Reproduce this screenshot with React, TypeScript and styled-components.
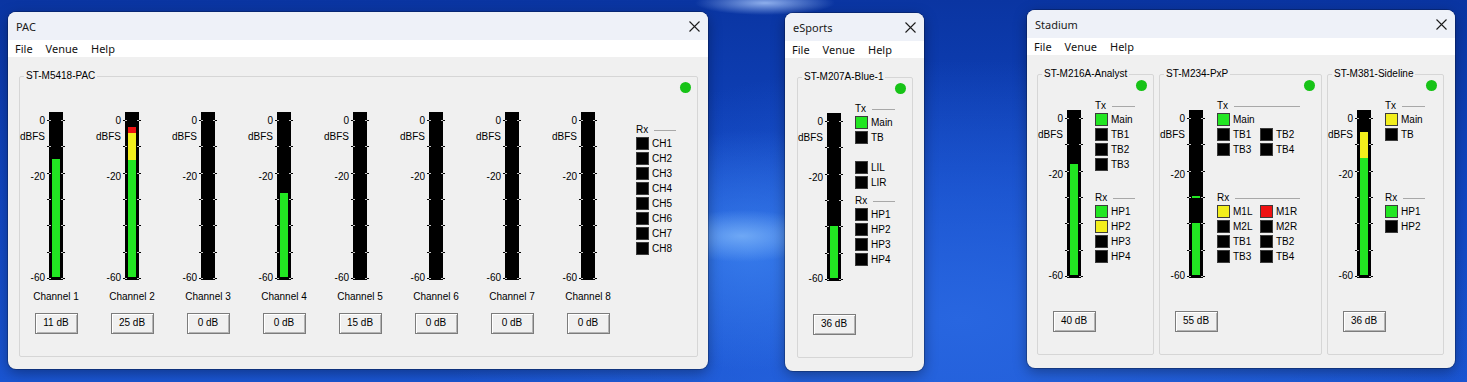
import React from 'react';
import styled, { createGlobalStyle } from 'styled-components';

const GlobalStyle = createGlobalStyle`
	html, body {
		margin: 0;
		padding: 0;
	}

	body {
		width: 1467px;
		height: 382px;
		overflow: hidden;
		font-family: "Liberation Sans", Arial, sans-serif;
	}
`;

const GREEN = '#22e622';
const YELLOW = '#f2ee1c';
const RED = '#ee1111';

const Desktop = styled.div`
	position: relative;
	width: 1467px;
	height: 382px;
	overflow: hidden;
	background:
		radial-gradient(ellipse 80px 26px at 742px 236px, rgba(130, 185, 250, 0.75), rgba(130, 185, 250, 0)),
		radial-gradient(ellipse 160px 120px at 750px 250px, rgba(60, 130, 240, 0.8), rgba(60, 130, 240, 0)),
		radial-gradient(ellipse 70px 12px at 765px 3px, rgba(175, 205, 255, 0.8), rgba(175, 205, 255, 0)),
		radial-gradient(ellipse 520px 260px at 960px 320px, #2866e0, rgba(40, 102, 224, 0)),
		linear-gradient(180deg, #0a35a2 0%, #1146c2 50%, #1a55d2 100%);
`;

/* windows sit on the desktop at their own place, like real desktop windows */
const Window = styled.div<{ $x: number; $y: number; $w: number; $h: number }>`
	position: absolute;
	left: ${(p) => p.$x}px;
	top: ${(p) => p.$y}px;
	width: ${(p) => p.$w}px;
	height: ${(p) => p.$h}px;
	display: flex;
	flex-direction: column;
	background-color: #f0f0f0;
	border-radius: 8px;
	overflow: hidden;
	box-shadow: 0 0 0 1px rgba(0, 0, 0, 0.22), 0 4px 14px rgba(0, 0, 0, 0.35);
`;

const TitleBar = styled.div`
	height: 28px;
	flex: none;
	display: flex;
	align-items: center;
	justify-content: space-between;
	padding: 0 8px 0 8px;
	background-color: #eef1f8;
	font-family: "Noto Sans", "Open Sans", sans-serif;
	font-size: 11px;
	color: #1a1a1a;
`;

const CloseButton = styled.span`
	display: flex;
	width: 11px;
	height: 11px;
`;

const MenuBar = styled.div`
	height: 17px;
	flex: none;
	display: flex;
	align-items: center;
	gap: 13px;
	padding-left: 7px;
	background-color: #ffffff;
	font-family: "Noto Sans", "Open Sans", sans-serif;
	font-size: 11px;
	color: #111;
`;

const Client = styled.div<{ $pad: string; $gap?: number }>`
	flex: 1;
	display: flex;
	gap: ${(p) => p.$gap || 0}px;
	padding: ${(p) => p.$pad};
	min-height: 0;
`;

const GroupBox = styled.fieldset<{ $w?: number }>`
	margin: 0;
	padding: 0 6px 0 0;
	min-width: 0;
	border: 1px solid #d6d6d6;
	border-radius: 2px;
	${(p) => (p.$w ? `width: ${p.$w}px; flex: none;` : 'flex: 1;')}
	box-sizing: border-box;
	font-size: 10px;
	color: #000;
`;

const Legend = styled.legend`
	margin-left: 4px;
	padding: 0 2px;
	line-height: 12px;
	font-size: 10px;
`;

const LedRow = styled.div`
	display: flex;
	justify-content: flex-end;
	height: 11px;
`;

const Led = styled.span`
	width: 11px;
	height: 11px;
	border-radius: 50%;
	background-color: #17c317;
`;

const Body = styled.div`
	display: flex;
	align-items: flex-start;
`;

const Strips = styled.div`
	display: flex;
	gap: 33px;
`;

const Strip = styled.div`
	display: flex;
	align-items: flex-start;
	gap: 4px;
	margin-top: 19px;
`;

const Scale = styled.div`
	width: 25px;
	height: 168px;
	display: flex;
	flex-direction: column;
	align-items: flex-end;
	font-size: 10px;
	line-height: 11px;
`;

const ScaleLabel = styled.span<{ $mt: number }>`
	margin-top: ${(p) => p.$mt}px;
`;

const BarColumn = styled.div`
	width: 14px;
	display: flex;
	flex-direction: column;
	align-items: center;
`;

const BarSvg = styled.svg`
	display: block;
	margin: 0 -2px;
	flex: none;
`;

const ChannelLabel = styled.span`
	margin-top: 11px;
	line-height: 12px;
	white-space: nowrap;
	font-size: 10px;
`;

const DbBox = styled.div<{ $mt: number }>`
	margin-top: ${(p) => p.$mt}px;
	flex: none;
	width: 43px;
	height: 21px;
	box-sizing: border-box;
	border: 1px solid #7c7c7c;
	box-shadow: inset 1px 1px 0 #ffffff, inset -1px -1px 0 #b4b4b4;
	background-color: #f0f0f0;
	text-align: center;
	font-size: 10px;
	line-height: 17px;
	white-space: nowrap;
`;

const Panel = styled.div<{ $ml: number; $mt: number }>`
	display: flex;
	flex-direction: column;
	margin-left: ${(p) => p.$ml}px;
	margin-top: ${(p) => p.$mt}px;
`;

const IndicatorGroup = styled.div<{ $cols: number; $minH?: number }>`
	display: flex;
	flex-direction: column;
	width: ${(p) => p.$cols * 43}px;
	min-height: ${(p) => p.$minH || 0}px;
`;

const GroupHeader = styled.div`
	display: flex;
	align-items: center;
	height: 13px;
	line-height: 13px;
	font-size: 10px;

	&::after {
		content: '';
		flex: 1;
		height: 1px;
		margin: 1px 3px 0 6px;
		background-color: #a8a8a8;
	}
`;

const IndicatorGrid = styled.div<{ $cols: number }>`
	display: grid;
	grid-template-columns: repeat(${(p) => p.$cols}, 43px);
	grid-auto-rows: 15px;
`;

const Indicator = styled.div`
	display: flex;
	align-items: center;
	gap: 3px;
	font-size: 10px;
	white-space: nowrap;
`;

const Square = styled.span<{ $color: string }>`
	width: 13px;
	height: 13px;
	box-sizing: border-box;
	border: 1px solid #3c3c3c;
	background-color: ${(p) => p.$color};
	flex: none;
`;

type Seg = { top: number; bottom: number; color: string };

interface MeterProps {
	segs: Seg[];
	peak?: number;
	label?: string;
	db: string;
}

const TICKS = [0, 1, 2, 3, 4, 5, 6].map((i) => Math.round(8 + (i * 158) / 6));

const Meter = ({ segs, peak, label, db }: MeterProps) => (
	<Strip>
		<Scale>
			<ScaleLabel $mt={3}>0</ScaleLabel>
			<ScaleLabel $mt={5}>dBFS</ScaleLabel>
			<ScaleLabel $mt={29}>-20</ScaleLabel>
			<ScaleLabel $mt={90}>-60</ScaleLabel>
		</Scale>
		<BarColumn>
			<BarSvg width={18} height={168} viewBox="0 0 18 168">
				<rect x={2} y={0} width={14} height={168} fill="#000" />
				{segs.map((s) => (
					<rect key={s.top} x={5} y={s.top} width={8} height={s.bottom - s.top} fill={s.color} />
				))}
				{peak !== undefined && <rect x={5} y={peak} width={8} height={2} fill={GREEN} />}
				{TICKS.map((y) => (
					<g key={y}>
						<line x1={0} x2={2} y1={y + 0.5} y2={y + 0.5} stroke="#000" />
						<line x1={2} x2={4} y1={y + 0.5} y2={y + 0.5} stroke="#c8c8c8" />
						<line x1={14} x2={16} y1={y + 0.5} y2={y + 0.5} stroke="#c8c8c8" />
						<line x1={16} x2={18} y1={y + 0.5} y2={y + 0.5} stroke="#000" />
					</g>
				))}
			</BarSvg>
			{label && <ChannelLabel>{label}</ChannelLabel>}
			<DbBox $mt={label ? 10 : 33}>{db}</DbBox>
		</BarColumn>
	</Strip>
);

type Item = { name: string; color?: string } | null;

const IndicatorList = ({ title, items, cols = 1, minH }: { title: string; items: Item[]; cols?: number; minH?: number }) => (
	<IndicatorGroup $cols={cols} $minH={minH}>
		<GroupHeader>{title}</GroupHeader>
		<IndicatorGrid $cols={cols}>
			{items.map((it, i) =>
				it ? (
					<Indicator key={i}>
						<Square $color={it.color || '#000'} />
						{it.name}
					</Indicator>
				) : (
					<span key={i} />
				)
			)}
		</IndicatorGrid>
	</IndicatorGroup>
);

const CloseIcon = () => (
	<CloseButton>
		<svg width={11} height={11} viewBox="0 0 11 11">
			<path d="M0.5 0.5 L10.5 10.5 M10.5 0.5 L0.5 10.5" stroke="#1c1c1c" strokeWidth={1.1} fill="none" />
		</svg>
	</CloseButton>
);

const WindowChrome = ({ title }: { title: string }) => (
	<>
		<TitleBar>
			<span>{title}</span>
			<CloseIcon />
		</TitleBar>
		<MenuBar>
			<span>File</span>
			<span>Venue</span>
			<span>Help</span>
		</MenuBar>
	</>
);

const g = (top: number): Seg[] => [{ top, bottom: 165, color: GREEN }];

const pacChannels: { segs: Seg[]; db: string }[] = [
	{ segs: g(47), db: '11 dB' },
	{
		segs: [
			{ top: 15, bottom: 21, color: RED },
			{ top: 21, bottom: 48, color: YELLOW },
			{ top: 48, bottom: 165, color: GREEN },
		],
		db: '25 dB',
	},
	{ segs: [], db: '0 dB' },
	{ segs: g(81), db: '0 dB' },
	{ segs: [], db: '15 dB' },
	{ segs: [], db: '0 dB' },
	{ segs: [], db: '0 dB' },
	{ segs: [], db: '0 dB' },
];

const App = () => (
	<Desktop>
		<GlobalStyle />

		<Window $x={8} $y={12} $w={700} $h={357}>
			<WindowChrome title="PAC" />
			<Client $pad="13px 10px 12px 11px">
				<GroupBox>
					<Legend>ST-M5418-PAC</Legend>
					<LedRow>
						<Led />
					</LedRow>
					<Body>
						<Strips>
							{pacChannels.map((c, i) => (
								<Meter key={i} segs={c.segs} label={`Channel ${i + 1}`} db={c.db} />
							))}
						</Strips>
						<Panel $ml={41} $mt={30}>
							<IndicatorList
								title="Rx"
								items={['CH1', 'CH2', 'CH3', 'CH4', 'CH5', 'CH6', 'CH7', 'CH8'].map((name) => ({ name }))}
							/>
						</Panel>
					</Body>
				</GroupBox>
			</Client>
		</Window>

		<Window $x={785} $y={13} $w={139} $h={358}>
			<WindowChrome title="eSports" />
			<Client $pad="13px 11px 13px 12px">
				<GroupBox>
					<Legend>ST-M207A-Blue-1</Legend>
					<LedRow>
						<Led />
					</LedRow>
					<Body>
						<Meter segs={g(113)} db="36 dB" />
						<Panel $ml={14} $mt={8}>
							<IndicatorList
								title="Tx"
								minH={92}
								items={[{ name: 'Main', color: GREEN }, { name: 'TB' }, null, { name: 'LIL' }, { name: 'LIR' }]}
							/>
							<IndicatorList title="Rx" items={[{ name: 'HP1' }, { name: 'HP2' }, { name: 'HP3' }, { name: 'HP4' }]} />
						</Panel>
					</Body>
				</GroupBox>
			</Client>
		</Window>

		<Window $x={1027} $y={10} $w={428} $h={358}>
			<WindowChrome title="Stadium" />
			<Client $pad="13px 11px 13px 10px" $gap={5}>
				<GroupBox $w={117}>
					<Legend>ST-M216A-Analyst</Legend>
					<LedRow>
						<Led />
					</LedRow>
					<Body>
						<Meter segs={g(54)} db="40 dB" />
						<Panel $ml={14} $mt={8}>
							<IndicatorList
								title="Tx"
								minH={92}
								items={[{ name: 'Main', color: GREEN }, { name: 'TB1' }, { name: 'TB2' }, { name: 'TB3' }]}
							/>
							<IndicatorList
								title="Rx"
								items={[{ name: 'HP1', color: GREEN }, { name: 'HP2', color: YELLOW }, { name: 'HP3' }, { name: 'HP4' }]}
							/>
						</Panel>
					</Body>
				</GroupBox>
				<GroupBox $w={163}>
					<Legend>ST-M234-PxP</Legend>
					<LedRow>
						<Led />
					</LedRow>
					<Body>
						<Meter segs={g(113)} peak={86} db="55 dB" />
						<Panel $ml={14} $mt={8}>
							<IndicatorList
								title="Tx"
								cols={2}
								minH={92}
								items={[{ name: 'Main', color: GREEN }, null, { name: 'TB1' }, { name: 'TB2' }, { name: 'TB3' }, { name: 'TB4' }]}
							/>
							<IndicatorList
								title="Rx"
								cols={2}
								items={[
									{ name: 'M1L', color: YELLOW },
									{ name: 'M1R', color: RED },
									{ name: 'M2L' },
									{ name: 'M2R' },
									{ name: 'TB1' },
									{ name: 'TB2' },
									{ name: 'TB3' },
									{ name: 'TB4' },
								]}
							/>
						</Panel>
					</Body>
				</GroupBox>
				<GroupBox $w={117}>
					<Legend>ST-M381-Sideline</Legend>
					<LedRow>
						<Led />
					</LedRow>
					<Body>
						<Meter
							segs={[
								{ top: 22, bottom: 48, color: YELLOW },
								{ top: 48, bottom: 165, color: GREEN },
							]}
							db="36 dB"
						/>
						<Panel $ml={14} $mt={8}>
							<IndicatorList title="Tx" minH={92} items={[{ name: 'Main', color: YELLOW }, { name: 'TB' }]} />
							<IndicatorList title="Rx" items={[{ name: 'HP1', color: GREEN }, { name: 'HP2' }]} />
						</Panel>
					</Body>
				</GroupBox>
			</Client>
		</Window>
	</Desktop>
);

export default App;
